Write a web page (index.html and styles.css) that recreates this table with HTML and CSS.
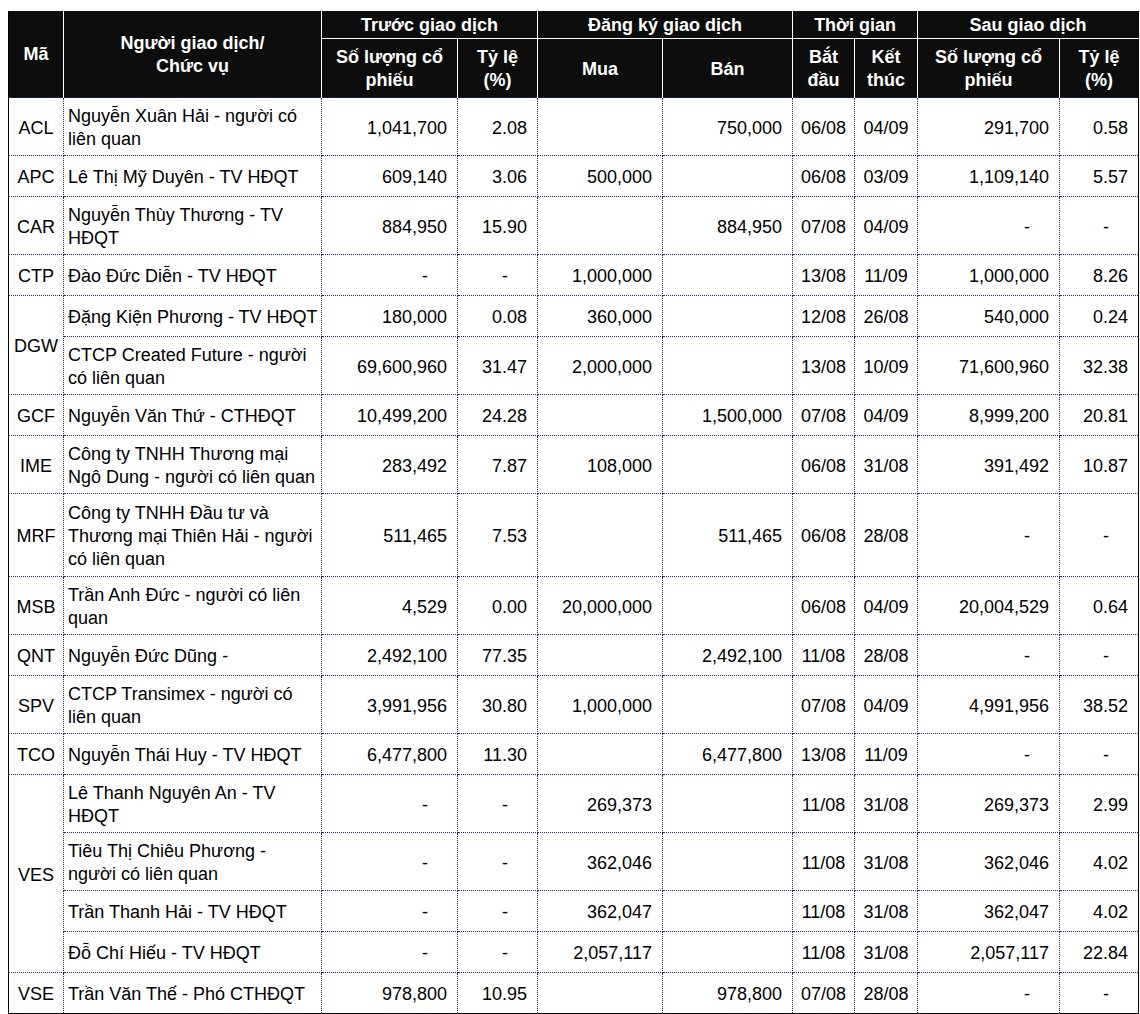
FILE: index.html
```html
<!DOCTYPE html>
<html lang="vi">
<head>
<meta charset="utf-8">
<title>Giao dịch cổ đông nội bộ</title>
<link rel="stylesheet" href="styles.css">
</head>
<body>
<table class="trades">
  <colgroup>
    <col class="c-ma"><col class="c-name"><col class="c-sl1"><col class="c-tl1"><col class="c-mua"><col class="c-ban"><col class="c-bd"><col class="c-kt"><col class="c-sl2"><col class="c-tl2">
  </colgroup>
  <thead>
    <tr class="hg">
      <th rowspan="2" class="edge-l">Mã</th>
      <th rowspan="2">Người giao dịch/<br>Chức vụ</th>
      <th colspan="2">Trước giao dịch</th>
      <th colspan="2">Đăng ký giao dịch</th>
      <th colspan="2">Thời gian</th>
      <th colspan="2" class="edge-r">Sau giao dịch</th>
    </tr>
    <tr class="hs">
      <th>Số lượng cổ<br>phiếu</th>
      <th>Tỷ lệ<br>(%)</th>
      <th>Mua</th>
      <th>Bán</th>
      <th>Bắt<br>đầu</th>
      <th>Kết<br>thúc</th>
      <th>Số lượng cổ<br>phiếu</th>
      <th class="edge-r">Tỷ lệ<br>(%)</th>
    </tr>
  </thead>
  <tbody>
    <tr class="r2">
      <td class="ma">ACL</td><td class="nm">Nguyễn Xuân Hải - người có<br>liên quan</td>
      <td class="n">1,041,700</td><td class="n">2.08</td><td class="n"></td><td class="n">750,000</td>
      <td class="dt">06/08</td><td class="dt">04/09</td><td class="n">291,700</td><td class="n">0.58</td>
    </tr>
    <tr class="r1">
      <td class="ma">APC</td><td class="nm">Lê Thị Mỹ Duyên - TV HĐQT</td>
      <td class="n">609,140</td><td class="n">3.06</td><td class="n">500,000</td><td class="n"></td>
      <td class="dt">06/08</td><td class="dt">03/09</td><td class="n">1,109,140</td><td class="n">5.57</td>
    </tr>
    <tr class="r2">
      <td class="ma">CAR</td><td class="nm">Nguyễn Thùy Thương - TV<br>HĐQT</td>
      <td class="n">884,950</td><td class="n">15.90</td><td class="n"></td><td class="n">884,950</td>
      <td class="dt">07/08</td><td class="dt">04/09</td><td class="n d">-</td><td class="n d">-</td>
    </tr>
    <tr class="r1">
      <td class="ma">CTP</td><td class="nm">Đào Đức Diễn - TV HĐQT</td>
      <td class="n d">-</td><td class="n d">-</td><td class="n">1,000,000</td><td class="n"></td>
      <td class="dt">13/08</td><td class="dt">11/09</td><td class="n">1,000,000</td><td class="n">8.26</td>
    </tr>
    <tr class="r1">
      <td class="ma" rowspan="2">DGW</td><td class="nm">Đặng Kiện Phương - TV HĐQT</td>
      <td class="n">180,000</td><td class="n">0.08</td><td class="n">360,000</td><td class="n"></td>
      <td class="dt">12/08</td><td class="dt">26/08</td><td class="n">540,000</td><td class="n">0.24</td>
    </tr>
    <tr class="r2">
      <td class="nm">CTCP Created Future - người<br>có liên quan</td>
      <td class="n">69,600,960</td><td class="n">31.47</td><td class="n">2,000,000</td><td class="n"></td>
      <td class="dt">13/08</td><td class="dt">10/09</td><td class="n">71,600,960</td><td class="n">32.38</td>
    </tr>
    <tr class="r1">
      <td class="ma">GCF</td><td class="nm">Nguyễn Văn Thứ - CTHĐQT</td>
      <td class="n">10,499,200</td><td class="n">24.28</td><td class="n"></td><td class="n">1,500,000</td>
      <td class="dt">07/08</td><td class="dt">04/09</td><td class="n">8,999,200</td><td class="n">20.81</td>
    </tr>
    <tr class="r2">
      <td class="ma">IME</td><td class="nm">Công ty TNHH Thương mại<br>Ngô Dung - người có liên quan</td>
      <td class="n">283,492</td><td class="n">7.87</td><td class="n">108,000</td><td class="n"></td>
      <td class="dt">06/08</td><td class="dt">31/08</td><td class="n">391,492</td><td class="n">10.87</td>
    </tr>
    <tr class="r3">
      <td class="ma">MRF</td><td class="nm">Công ty TNHH Đầu tư và<br>Thương mại Thiên Hải - người<br>có liên quan</td>
      <td class="n">511,465</td><td class="n">7.53</td><td class="n"></td><td class="n">511,465</td>
      <td class="dt">06/08</td><td class="dt">28/08</td><td class="n d">-</td><td class="n d">-</td>
    </tr>
    <tr class="r2">
      <td class="ma">MSB</td><td class="nm">Trần Anh Đức - người có liên<br>quan</td>
      <td class="n">4,529</td><td class="n">0.00</td><td class="n">20,000,000</td><td class="n"></td>
      <td class="dt">06/08</td><td class="dt">04/09</td><td class="n">20,004,529</td><td class="n">0.64</td>
    </tr>
    <tr class="r1">
      <td class="ma">QNT</td><td class="nm">Nguyễn Đức Dũng -</td>
      <td class="n">2,492,100</td><td class="n">77.35</td><td class="n"></td><td class="n">2,492,100</td>
      <td class="dt">11/08</td><td class="dt">28/08</td><td class="n d">-</td><td class="n d">-</td>
    </tr>
    <tr class="r2">
      <td class="ma">SPV</td><td class="nm">CTCP Transimex - người có<br>liên quan</td>
      <td class="n">3,991,956</td><td class="n">30.80</td><td class="n">1,000,000</td><td class="n"></td>
      <td class="dt">07/08</td><td class="dt">04/09</td><td class="n">4,991,956</td><td class="n">38.52</td>
    </tr>
    <tr class="r1">
      <td class="ma">TCO</td><td class="nm">Nguyễn Thái Huy - TV HĐQT</td>
      <td class="n">6,477,800</td><td class="n">11.30</td><td class="n"></td><td class="n">6,477,800</td>
      <td class="dt">13/08</td><td class="dt">11/09</td><td class="n d">-</td><td class="n d">-</td>
    </tr>
    <tr class="r2">
      <td class="ma" rowspan="4">VES</td><td class="nm">Lê Thanh Nguyên An - TV<br>HĐQT</td>
      <td class="n d">-</td><td class="n d">-</td><td class="n">269,373</td><td class="n"></td>
      <td class="dt">11/08</td><td class="dt">31/08</td><td class="n">269,373</td><td class="n">2.99</td>
    </tr>
    <tr class="r2">
      <td class="nm">Tiêu Thị Chiêu Phương -<br>người có liên quan</td>
      <td class="n d">-</td><td class="n d">-</td><td class="n">362,046</td><td class="n"></td>
      <td class="dt">11/08</td><td class="dt">31/08</td><td class="n">362,046</td><td class="n">4.02</td>
    </tr>
    <tr class="r1">
      <td class="nm">Trần Thanh Hải - TV HĐQT</td>
      <td class="n d">-</td><td class="n d">-</td><td class="n">362,047</td><td class="n"></td>
      <td class="dt">11/08</td><td class="dt">31/08</td><td class="n">362,047</td><td class="n">4.02</td>
    </tr>
    <tr class="r1">
      <td class="nm">Đỗ Chí Hiếu - TV HĐQT</td>
      <td class="n d">-</td><td class="n d">-</td><td class="n">2,057,117</td><td class="n"></td>
      <td class="dt">11/08</td><td class="dt">31/08</td><td class="n">2,057,117</td><td class="n">22.84</td>
    </tr>
    <tr class="r1">
      <td class="ma">VSE</td><td class="nm">Trần Văn Thế - Phó CTHĐQT</td>
      <td class="n">978,800</td><td class="n">10.95</td><td class="n"></td><td class="n">978,800</td>
      <td class="dt">07/08</td><td class="dt">28/08</td><td class="n d">-</td><td class="n d">-</td>
    </tr>
  </tbody>
</table>
</body>
</html>
```

FILE: styles.css
```css
html, body {
  background: #ffffff;
}

body {
  margin: 0;
  padding: 11px 0 0 8px;
  font-family: "Liberation Sans", Arial, sans-serif;
  color: #000000;
}

.trades {
  border-collapse: collapse;
  table-layout: fixed;
  width: 1130px;
  font-size: 18px;
  line-height: 23px;
  border: 1px solid #000000;
}

.c-ma { width: 55px; }
.c-name { width: 258px; }
.c-sl1 { width: 136px; }
.c-tl1 { width: 80px; }
.c-mua { width: 125px; }
.c-ban { width: 130px; }
.c-bd { width: 62px; }
.c-kt { width: 63px; }
.c-sl2 { width: 142px; }
.c-tl2 { width: 79px; }

.trades th {
  background: #0d0d0d;
  color: #ffffff;
  font-weight: bold;
  text-align: center;
  vertical-align: middle;
  padding: 0;
  border-left: 1px solid #ffffff;
  border-right: 1px solid #ffffff;
  border-top: 1px solid #0d0d0d;
  border-bottom: 1px solid #ffffff;
}

.trades .hs th {
  padding-top: 2px;
}

.trades th.edge-l {
  border-left-color: #000000;
}

.trades th.edge-r {
  border-right-color: #000000;
}

.trades th[rowspan] {
  border-bottom: none;
}

.trades .hs th {
  border-bottom: none;
}

.hg { height: 27px; }
.hs { height: 59px; }

.trades td {
  border: 1px dotted #1f2a70;
  vertical-align: middle;
  padding: 3px 10px 0 4px;
  white-space: nowrap;
}

.r1 { height: 41px; }
.r2 { height: 58px; }
.r3 { height: 83px; }

.trades td.ma {
  text-align: center;
  padding: 3px 0 0 0;
}

.trades td.nm {
  text-align: left;
  padding: 3px 2px 0 4px;
}

.trades td.n {
  text-align: right;
}

.trades td.d {
  padding-right: 29px;
}

.trades td.dt {
  text-align: center;
  padding: 3px 0 0 0;
}
```
